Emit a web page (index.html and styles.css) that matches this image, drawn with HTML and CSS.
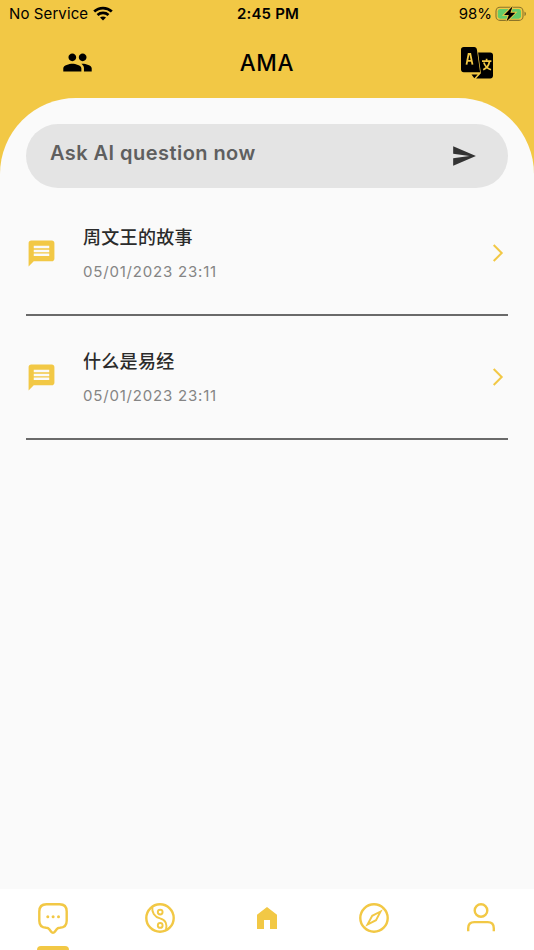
FILE: index.html
```html
<!DOCTYPE html>
<html lang="en">
<head>
    <meta charset="UTF-8">
    <meta name="viewport" content="width=device-width, initial-scale=1.0">
    <title>AMA</title>
    <link rel="stylesheet" href="styles.css">
</head>
<body>
    <div class="status-bar">
        <div class="carrier">
            <span class="carrier-name">No Service</span>
            <svg class="wifi" width="20" height="15" viewBox="0 0 20 15" fill="none" stroke="#000" stroke-width="2.7">
                <path d="M1.2 5.5C6.1.9 13.9.9 18.8 5.5"/>
                <path d="M4.5 9C7.6 6.2 12.4 6.2 15.5 9"/>
                <path d="M10 14.4L7 11.5c1.7-1.5 4.3-1.5 6 0z" fill="#000" stroke="none"/>
            </svg>
        </div>
        <div class="clock">2:45 PM</div>
        <div class="battery">
            <span class="percent">98%</span>
            <svg width="32" height="16" viewBox="0 0 32 16">
                <rect x="1" y="1.2" width="27" height="13.2" rx="4" fill="none" stroke="#000" stroke-opacity=".42" stroke-width="1.1"/>
                <path d="M29.5 5.5c1.9.8 1.9 3.8 0 4.6z" fill="#000" fill-opacity=".45"/>
                <rect x="2.8" y="2.9" width="23.2" height="9.8" rx="2.4" fill="#65cb69"/>
                <path d="M17.6.3L9 8.9h4.8l-2.4 6.6 8.9-8.8h-4.9z" fill="#000" stroke="#f2c845" stroke-width="1.8" paint-order="stroke"/>
            </svg>
        </div>
    </div>

    <header class="header">
        <svg class="people" width="31" height="31" viewBox="0 0 24 24">
            <path d="M16 11c1.66 0 2.99-1.34 2.99-3S17.66 5 16 5s-3 1.34-3 3 1.34 3 3 3zm-8 0c1.66 0 2.99-1.34 2.99-3S9.66 5 8 5 5 6.34 5 8s1.34 3 3 3zm0 2c-2.33 0-7 1.17-7 3.5V19h14v-2.5c0-2.33-4.67-3.5-7-3.5zm8 0c-.29 0-.62.02-.97.05 1.16.84 1.97 1.97 1.97 3.45V19h6v-2.5c0-2.33-4.67-3.5-7-3.5z"/>
        </svg>
        <h1>AMA</h1>
        <svg class="translate" width="34" height="34" viewBox="0 0 34 34">
            <path d="M3.7 1H14.200c1.5 0 2.5.9 2.7 2.4l3.2 22.8H3.700C2.100 26.200 1 25.100 1 23.500V3.700C1 2.100 2.100 1 3.700 1z"/>
            <path d="M18.100 6.600H30.300c1.6 0 2.700 1.100 2.700 2.700v20.400c0 1.600-1.100 2.700-2.700 2.700H16.100l4.800-5.200z"/>
            <path d="M11.500 28.500h6.200L14.300 32.200z"/>
            <path d="M6.500 18.600L8.600 8h1.700l2.200 10.600M7.300 14.900h4.500" fill="none" stroke="#f2c845" stroke-width="1.8"/>
            <path d="M22 15.200h9.400M26.600 12.800v2.400M23.200 23.800c3.500-1.700 5.700-4.700 6.300-8.300M23.800 16.500c1.200 3.600 3.700 6.100 7.200 7.300" fill="none" stroke="#f2c845" stroke-width="1.7"/>
        </svg>
    </header>

    <main class="sheet">
        <div class="ask">
            <span class="ask-hint">Ask AI question now</span>
            <svg width="26" height="26" viewBox="0 0 24 24">
                <path d="M2.01 21L23 12 2.01 3 2 10l15 2-15 2z" fill="#333"/>
            </svg>
        </div>

        <div class="question">
            <svg class="bubble" width="31" height="31" viewBox="0 0 24 24">
                <path d="M20 2H4c-1.1 0-1.99.9-1.99 2L2 22l4-4h14c1.1 0 2-.9 2-2V4c0-1.1-.9-2-2-2zm-2 12H6v-2h12v2zm0-3H6V9h12v2zm0-3H6V6h12v2z"/>
            </svg>
            <div class="question-text">
                <div class="question-title">周文王的故事</div>
                <div class="question-date">05/01/2023 23:11</div>
            </div>
            <svg class="chevron" width="12" height="20" viewBox="0 0 12 20">
                <path d="M1.7 2L9.7 10 1.7 18"/>
            </svg>
        </div>

        <div class="question">
            <svg class="bubble" width="31" height="31" viewBox="0 0 24 24">
                <path d="M20 2H4c-1.1 0-1.99.9-1.99 2L2 22l4-4h14c1.1 0 2-.9 2-2V4c0-1.1-.9-2-2-2zm-2 12H6v-2h12v2zm0-3H6V9h12v2zm0-3H6V6h12v2z"/>
            </svg>
            <div class="question-text">
                <div class="question-title">什么是易经</div>
                <div class="question-date">05/01/2023 23:11</div>
            </div>
            <svg class="chevron" width="12" height="20" viewBox="0 0 12 20">
                <path d="M1.7 2L9.7 10 1.7 18"/>
            </svg>
        </div>
    </main>

    <nav class="tabs">
        <div class="tab active">
            <svg width="32" height="32" viewBox="0 0 32 32">
                <path d="M9.5 2.200h13c4.5 0 7.200 2.700 7.200 7.200v9.400c0 4.300-2.600 6.900-6.900 7-1.500 0-2.300.3-3.100 1.400l-1.900 2.500c-1 1.300-2.600 1.300-3.600 0l-1.900-2.500c-.8-1.100-1.600-1.400-3.100-1.400-4.300-.1-6.900-2.700-6.900-7V9.400c0-4.500 2.700-7.200 7.200-7.200z"/>
                <g class="solid"><circle cx="10.800" cy="14.800" r="1.5"/><circle cx="16.100" cy="14.800" r="1.5"/><circle cx="21.500" cy="14.800" r="1.5"/></g>
            </svg>
        </div>
        <div class="tab">
            <svg width="32" height="32" viewBox="0 0 32 32">
                <circle cx="16" cy="16" r="13.7"/>
                <path class="thin" d="M8.400 4.900c-.8 5.200 1.800 10.100 7.600 11.500 5.800 1.400 7.500 6 5.900 11.800"/>
                <circle class="thin" cx="16.200" cy="10.100" r="2.4"/>
                <circle class="thin" cx="16.200" cy="23.400" r="2.4"/>
            </svg>
        </div>
        <div class="tab">
            <svg width="32" height="32" viewBox="0 0 32 32">
                <path class="solid" d="M6 27V12.800L16 5l10 7.800V27h-7v-9h-6v9z"/>
            </svg>
        </div>
        <div class="tab">
            <svg width="32" height="32" viewBox="0 0 32 32">
                <circle cx="16" cy="16" r="13.7"/>
                <path class="thin" d="M22.600 9.500l-8.400 4.300-4.700 8.700 8.500-4.300z"/>
            </svg>
        </div>
        <div class="tab">
            <svg width="32" height="32" viewBox="0 0 32 32">
                <circle cx="16" cy="8.500" r="6.300"/>
                <path d="M3.200 29.200v-3c0-4 2.100-6.100 6.100-6.100h13.400c4 0 6.100 2.100 6.100 6.100v3"/>
            </svg>
        </div>
    </nav>
</body>
</html>
```
FILE: styles.css
```css
* {
    box-sizing: border-box;
}

body {
    margin: 0;
    height: 100vh;
    display: flex;
    flex-direction: column;
    overflow: hidden;
    background-color: #f2c845;
    font-family: Inter, "Noto Sans CJK SC", sans-serif;
    color: #000;
}

svg {
    display: block;
    flex-shrink: 0;
}

.status-bar {
    display: grid;
    grid-template-columns: 1fr auto 1fr;
    height: 27px;
    padding: 0 7px 0 9px;
    font-size: 15px;
    line-height: 28px;
}

.carrier, .battery {
    display: flex;
    align-items: center;
}

.carrier {
    gap: 5px;
}

.carrier-name {
    letter-spacing: 0.1px;
}

.wifi {
    margin-bottom: 1px;
}

.clock {
    font-weight: 600;
    letter-spacing: 0.2px;
}

.battery {
    justify-content: flex-end;
    gap: 3px;
}

.header {
    display: grid;
    grid-template-columns: 1fr auto 1fr;
    align-items: center;
    height: 71px;
    padding: 0 40px;
}

.header h1 {
    margin: 0;
    font-size: 22.5px;
    font-weight: 500;
    letter-spacing: 0.7px;
}

.people {
    margin-left: 22px;
}

.translate {
    justify-self: end;
}

.sheet {
    flex: 1;
    padding: 26px 26px 0;
    background-color: #fafafa;
    border-radius: 76px 76px 0 0;
}

.ask {
    display: flex;
    justify-content: space-between;
    align-items: center;
    height: 64px;
    padding: 0 31px 0 24px;
    background-color: #e4e4e4;
    border-radius: 32px;
}

.ask-hint {
    padding-bottom: 7px;
    font-size: 20px;
    font-weight: 600;
    letter-spacing: 0.45px;
    color: #5f5f5f;
}

.question {
    display: flex;
    align-items: center;
    height: 124px;
    border-bottom: 2px solid #6a6a6a;
}

.ask + .question {
    margin-top: 4px;
}

.bubble {
    fill: #f2c845;
}

.question-text {
    flex: 1;
    padding-left: 26px;
}

.question-title {
    padding-top: 1px;
    font-size: 18px;
    line-height: 26px;
    font-weight: 500;
    letter-spacing: 0.3px;
    color: #2b2b2b;
}

.question-date {
    margin-top: 11px;
    font-size: 15px;
    line-height: 20px;
    font-weight: 400;
    letter-spacing: 0.8px;
    color: #858585;
}

.chevron {
    margin-right: 4px;
    fill: none;
    stroke: #f2c845;
    stroke-width: 2;
}

.tabs {
    display: grid;
    grid-template-columns: repeat(5, 1fr);
    height: 61px;
    background-color: #fff;
}

.tab {
    position: relative;
    display: flex;
    justify-content: center;
    padding-top: 13px;
}

.tab svg {
    fill: none;
    stroke: #f2c845;
    stroke-width: 2.4;
}

.tab .thin {
    stroke-width: 1.9;
}

.tab .solid {
    fill: #f2c845;
    stroke: none;
}

.tab.active::after {
    content: "";
    position: absolute;
    bottom: 0;
    left: calc(50% - 16px);
    width: 32px;
    height: 4px;
    background-color: #f2c845;
    border-radius: 4px 4px 0 0;
}
```
